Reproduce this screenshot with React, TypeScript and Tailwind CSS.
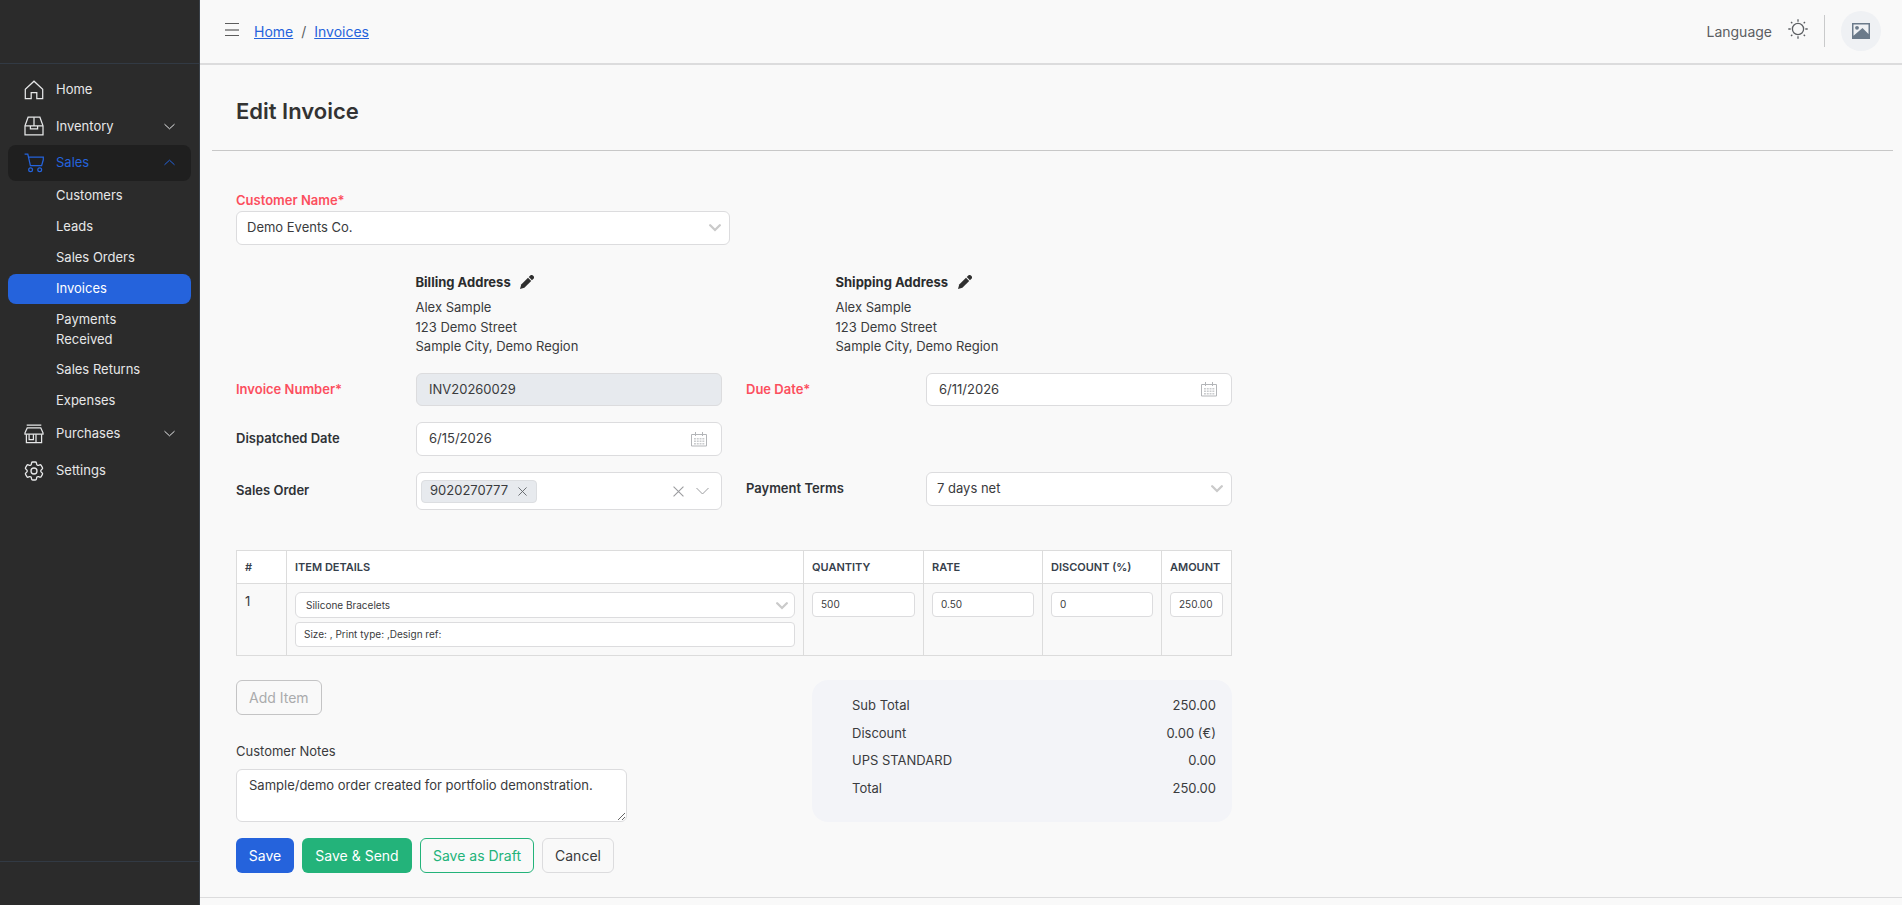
import React from 'react';
import { HiOutlineCog6Tooth } from 'react-icons/hi2';

const salesLinks = ['Customers', 'Leads', 'Sales Orders', 'Invoices', 'Payments Received', 'Sales Returns', 'Expenses'];

const totals = [
  { label: 'Sub Total', value: '250.00' },
  { label: 'Discount', value: '0.00 (€)' },
  { label: 'UPS STANDARD', value: '0.00' },
  { label: 'Total', value: '250.00' },
];

const navIcon = { width: 20, height: 20, viewBox: '0 0 20 20', fill: 'none', stroke: 'currentColor', strokeWidth: 1.25 };

function HomeIcon() {
  return (
    <svg {...navIcon}>
      <path d="M1.3 18.7V9.2L10 1.2l8.7 8v9.5h-5.9v-6.1H7.2v6.1z" />
    </svg>
  );
}

function DrawerIcon() {
  return (
    <svg {...navIcon}>
      <path d="M1 18.8V9.8L4.1 1.2h11.8L19 9.8v9z" />
      <path d="M1 9.8h5.4v3h7.2v-3H19M10 1.2v8.6M6.4 9.8h7.2" />
    </svg>
  );
}

function CartIcon() {
  return (
    <svg {...navIcon}>
      <path d="M.6 1.2h3.2l2.6 11.4h11.2l1.7-5.8V4H4.5" />
      <circle cx="6.6" cy="16.8" r="1.9" />
      <circle cx="15.7" cy="16.8" r="1.9" />
    </svg>
  );
}

function StoreIcon() {
  return (
    <svg {...navIcon}>
      <path d="M2.7 1.2h14.6M3.2 3.9h13.6L19 8.8v1.4H1V8.8z" />
      <path d="M2.4 10.2v8.5h15.2v-8.5M5.1 10.2v5.4h4.3v-5.4M12 18.7v-8.5" />
    </svg>
  );
}

function NavChevron({ up = false }: { up?: boolean }) {
  return (
    <svg width="11" height="7" viewBox="0 0 11 7" fill="none" stroke="currentColor" className="ml-auto">
      <path d={up ? 'M.5 5.8l5-4.6 5 4.6' : 'M.5 1.2l5 4.6 5-4.6'} />
    </svg>
  );
}

function NavItem({ icon, label, chevron, active }: { icon: React.ReactNode; label: string; chevron?: 'up' | 'down'; active?: boolean }) {
  return (
    <a className={`flex h-[36.5px] shrink-0 items-center rounded-lg pl-4 pr-4 ${active ? 'bg-[#1f1f1f] text-[#2463dc]' : 'text-[#e6e7e8]'}`}>
      {icon}
      <span className="ml-3">{label}</span>
      {chevron && <NavChevron up={chevron === 'up'} />}
    </a>
  );
}

function Sidebar() {
  return (
    <aside className="flex w-[200px] shrink-0 flex-col border-r border-[#3a4149] bg-[#2b2b2b] text-[13px] leading-[19.5px]">
      <div className="h-16 shrink-0 border-b border-[#323a44]" />
      <nav className="flex grow flex-col px-2 pt-[7.5px]">
        <NavItem icon={<HomeIcon />} label="Home" />
        <NavItem icon={<DrawerIcon />} label="Inventory" chevron="down" />
        <NavItem icon={<CartIcon />} label="Sales" chevron="up" active />
        <div className="flex flex-col gap-px">
          {salesLinks.map((link) => (
            <a
              key={link}
              className={`rounded-lg pl-12 pr-10 ${link === 'Payments Received' ? 'py-[4.7px] leading-5' : 'py-[5.2px]'} ${link === 'Invoices' ? 'bg-[#2563dc] text-white' : 'text-[#e6e7e8]'}`}
            >
              {link}
            </a>
          ))}
        </div>
        <NavItem icon={<StoreIcon />} label="Purchases" chevron="down" />
        <div className="mt-[0.5px]">
          <NavItem icon={<HiOutlineCog6Tooth size={24} strokeWidth={1.3} className="-mx-0.5" />} label="Settings" />
        </div>
      </nav>
      <div className="h-11 shrink-0 border-t border-[#323a44]" />
    </aside>
  );
}

function SunIcon() {
  return (
    <svg width="20" height="20" viewBox="0 0 20 20" fill="none" stroke="#5c5f63" strokeWidth="1.3">
      <circle cx="10" cy="10" r="5.6" />
      <path d="M10 .3v2.4M10 17.3v2.4M.3 10h2.4M17.3 10h2.4M3 3l1.3 1.3M15.7 15.7L17 17M3 17l1.3-1.3M15.7 4.3L17 3" />
    </svg>
  );
}

function Header() {
  return (
    <header className="flex h-[65px] shrink-0 items-center border-b-2 border-[#dcdcdd] pl-[25px] pr-[21px] text-sm text-[#5b5e62]">
      <svg width="14" height="14" viewBox="0 0 14 14" className="-mt-[3px] mr-[15px]" shapeRendering="crispEdges">
        <path d="M0 .5h14M0 12.5h14" stroke="#5c5c5c" />
        <path d="M0 6.5h14" stroke="#999" strokeWidth="2" />
      </svg>
      <nav className="flex pt-px">
        <a className="text-[#2563dc] underline">Home</a>
        <span className="w-[21px] text-center">/</span>
        <a className="text-[#2563dc] underline">Invoices</a>
      </nav>
      <div className="-mt-px ml-auto flex items-center">
        <span className="pt-0.5">Language</span>
        <div className="-mt-1 ml-4">
          <SunIcon />
        </div>
        <div className="ml-4 h-8 w-px bg-[#c9cacb]" />
        <div className="ml-4 flex size-10 items-center justify-center rounded-full bg-[#eff1f4]">
          <svg width="18" height="16" viewBox="0 0 18 16">
            <path fillRule="evenodd" fill="#6b7a8a" d="M0 0h18v16H0zM1.5 1.5v11.3L10.5 5l6 6V1.5z" />
            <circle cx="5" cy="4.8" r="1.9" fill="#6b7a8a" />
          </svg>
        </div>
      </div>
    </header>
  );
}

function SelectChevron() {
  return (
    <svg width="12" height="8" viewBox="0 0 12 8" fill="none" stroke="#cacaca" strokeWidth="2.3" strokeLinecap="round" className="ml-auto">
      <path d="M1.2 1.3L6 6l4.8-4.7" />
    </svg>
  );
}

function CalendarIcon() {
  return (
    <svg width="16" height="15" viewBox="0 0 16 15" fill="none" stroke="#b3b5b8" className="ml-auto">
      <path d="M4.5 0v4M11.5 0v4M.5 2.5h15V14H.5z" />
      <path d="M3 6.75h10.5M3 9.25h10.5M3 11.75h10.5" stroke="#c9cbcd" strokeWidth="1.5" strokeDasharray="1.9 .9" />
    </svg>
  );
}

function PencilIcon() {
  return (
    <svg width="14" height="14" viewBox="0 0 15 15" fill="#2f2f2f">
      <path d="M0 15l1.3-4.7L8.6 3 12 6.4l-7.3 7.3z" />
      <path d="M9.4 2.2L11 .6a2 2 0 0 1 2.8 0l.6.6a2 2 0 0 1 0 2.8l-1.6 1.6z" />
    </svg>
  );
}

function Cross({ size, color }: { size: number; color: string }) {
  return (
    <svg width={size} height={size} viewBox="0 0 10 10" fill="none" stroke={color}>
      <path d="M.5.5l9 9M9.5.5l-9 9" />
    </svg>
  );
}

function Address({ title }: { title: string }) {
  return (
    <div className="leading-[19.5px]">
      <div className="mb-1.5 flex items-center gap-[9.5px]">
        <span className="font-bold text-[#2b2c2e]">{title}</span>
        <PencilIcon />
      </div>
      <div>Alex Sample</div>
      <div>123 Demo Street</div>
      <div>Sample City, Demo Region</div>
    </div>
  );
}

const field = 'flex items-center rounded-md border border-[#dcdcde] bg-white';
const label = 'font-semibold text-[#2f3236]';
const required = 'font-semibold text-[#fc4f5e]';
const small = 'flex h-[25px] items-center rounded border border-[#dcdcde] bg-white px-2 text-[10px]';
const th = 'flex items-center border-r border-[#dcdcdc] px-2 pt-px';
const td = 'border-r border-[#dcdcdc] px-2 pt-2';

function ItemsTable() {
  return (
    <div className="mt-10 w-[996px] border-l border-t border-[#dcdcdc]">
      <div className="grid h-[33px] grid-cols-[50px_517px_120px_119px_119px_70px] border-b border-[#dcdcdc] bg-white text-[11px] font-semibold text-[#36404b]">
        <div className={th}>#</div>
        <div className={th}>ITEM DETAILS</div>
        <div className={th}>QUANTITY</div>
        <div className={th}>RATE</div>
        <div className={th}>DISCOUNT (%)</div>
        <div className={th}>AMOUNT</div>
      </div>
      <div className="grid h-[72px] grid-cols-[50px_517px_120px_119px_119px_70px] border-b border-[#dcdcdc]">
        <div className={td}>1</div>
        <div className={td}>
          <div className="flex h-[26px] items-center rounded-md border border-[#dcdcde] bg-white pl-2.5 pr-1.5 pt-px text-[10px]">
            Silicone Bracelets
            <SelectChevron />
          </div>
          <div className={`${small} mt-1`}>Size: , Print type: ,Design ref:</div>
        </div>
        <div className={td}><div className={small}>500</div></div>
        <div className={td}><div className={small}>0.50</div></div>
        <div className={td}><div className={small}>0</div></div>
        <div className={td}><div className={small}>250.00</div></div>
      </div>
    </div>
  );
}

function InvoiceForm() {
  return (
    <div className="flex flex-col items-start pl-9 pt-10 text-[13px] leading-[19.5px] text-[#3a3b3d]">
      <div className={required}>Customer Name*</div>
      <div className={`${field} mt-[0.5px] h-[34px] w-[494px] pl-2.5 pr-2`}>
        Demo Events Co.
        <SelectChevron />
      </div>

      <div className="mt-[27.5px] grid grid-cols-[420px_420px] pl-[179.5px]">
        <Address title="Billing Address" />
        <Address title="Shipping Address" />
      </div>

      <div className="mt-[16.5px] grid grid-cols-[180px_306px_24px_180px_306px] items-center">
        <div className={required}>Invoice Number*</div>
        <div className="flex h-[33px] items-center rounded-md border border-[#dcdcde] bg-[#e7eaee] px-3">INV20260029</div>
        <div />
        <div className={required}>Due Date*</div>
        <div className={`${field} h-[33px] pl-3 pr-3.5`}>
          6/11/2026
          <CalendarIcon />
        </div>
      </div>

      <div className="mt-4 grid grid-cols-[180px_306px] items-center">
        <div className={label}>Dispatched Date</div>
        <div className={`${field} h-[34px] pl-3 pr-3.5`}>
          6/15/2026
          <CalendarIcon />
        </div>
      </div>

      <div className="mt-4 grid grid-cols-[180px_306px_24px_180px_306px] items-start">
        <div className={`${label} pt-[9px]`}>Sales Order</div>
        <div className={`${field} h-[38px] pl-1 pr-3`}>
          <div className="flex h-[23px] items-center gap-2.5 rounded border border-[#dcdee1] bg-[#e7eaee] pl-2 pr-[9px]">
            9020270777
            <Cross size={9} color="#5f6368" />
          </div>
          <div className="ml-auto flex items-center gap-3">
            <Cross size={11} color="#9b9c9f" />
            <svg width="13" height="8" viewBox="0 0 13 8" fill="none" stroke="#9b9c9f">
              <path d="M.5 1l6 6 6-6" />
            </svg>
          </div>
        </div>
        <div />
        <div className={`${label} pt-[7px]`}>Payment Terms</div>
        <div className={`${field} h-[34px] pl-2.5 pr-2`}>
          7 days net
          <SelectChevron />
        </div>
      </div>

      <ItemsTable />

      <div className="mt-6 flex w-[996px] justify-between">
        <div>
          <button className="h-[35px] rounded-md border border-[#c4c4c5] px-3 text-sm text-[#aaabac]">Add Item</button>
          <div className="mt-[26.5px]">Customer Notes</div>
          <textarea
            readOnly
            className="mt-2 block h-[53px] w-[391px] rounded-md border border-[#dcdcde] bg-white px-3 py-1.5 outline-none"
            value="Sample/demo order created for portfolio demonstration."
          />
        </div>
        <div className="h-[142px] w-[420px] rounded-2xl bg-[#f3f4f8] pl-10 pr-4 pt-4">
          {totals.map((row) => (
            <div key={row.label} className="flex h-[27.6px] justify-between">
              <span>{row.label}</span>
              <span>{row.value}</span>
            </div>
          ))}
        </div>
      </div>

      <div className="mt-4 flex gap-2 text-sm">
        <button className="h-[35px] w-[58px] rounded-md bg-[#2563dc] text-white">Save</button>
        <button className="h-[35px] w-[110px] rounded-md bg-[#23b37a] text-white">Save &amp; Send</button>
        <button className="h-[35px] w-[114px] rounded-md border border-[#23b37a] text-[#23b37a]">Save as Draft</button>
        <button className="h-[35px] w-[72px] rounded-md border border-[#dcdcde] text-[#3a3b3d]">Cancel</button>
      </div>
    </div>
  );
}

export default function App() {
  return (
    <div className="flex h-screen overflow-hidden bg-[#f9f9f9] font-['Inter',sans-serif]">
      <Sidebar />
      <main className="flex grow flex-col">
        <Header />
        <div className="ml-3 mr-[9px] flex h-[86px] shrink-0 items-center border-b border-[#c8c8c8] pl-6 pt-2">
          <h1 className="text-[22px] font-semibold text-[#333]">Edit Invoice</h1>
        </div>
        <InvoiceForm />
        <footer className="mt-auto h-2 shrink-0 border-t border-[#dcdcdd]" />
      </main>
    </div>
  );
}
